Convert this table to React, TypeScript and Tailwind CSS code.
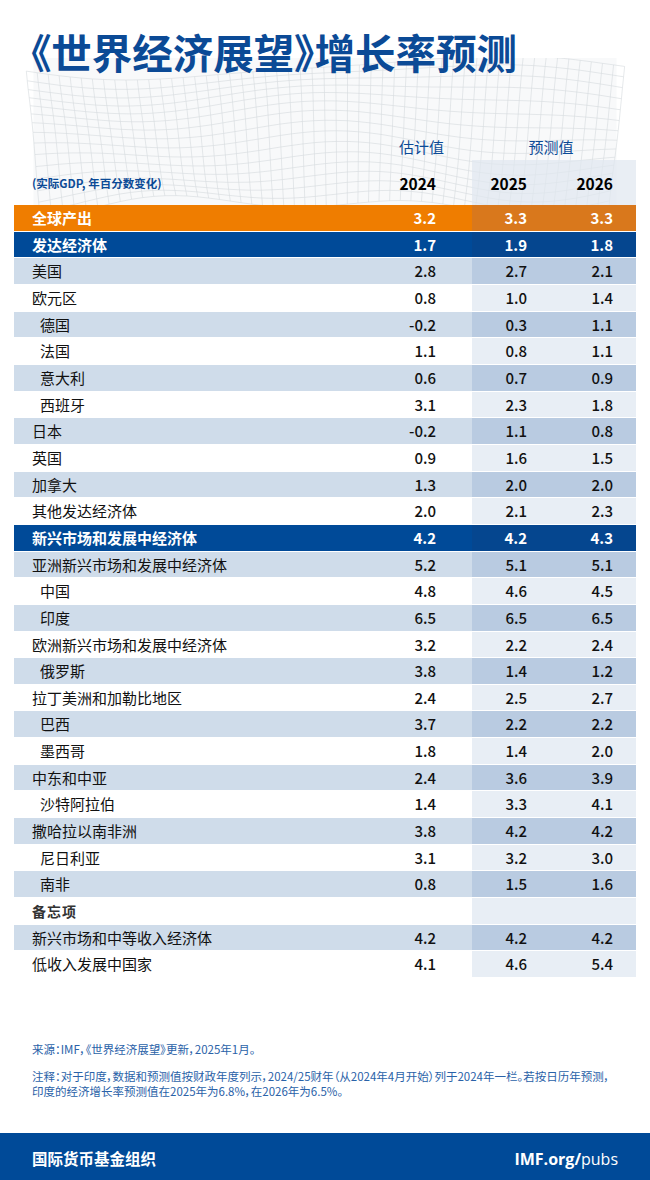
import React from "react";

type Row = {
  label: string;
  v: [string, string, string];
  kind?: "orange" | "blue" | "memo";
  indent?: boolean;
};

const rows: Row[] = [
  { label: "全球产出", v: ["3.2", "3.3", "3.3"], kind: "orange" },
  { label: "发达经济体", v: ["1.7", "1.9", "1.8"], kind: "blue" },
  { label: "美国", v: ["2.8", "2.7", "2.1"] },
  { label: "欧元区", v: ["0.8", "1.0", "1.4"] },
  { label: "德国", v: ["-0.2", "0.3", "1.1"], indent: true },
  { label: "法国", v: ["1.1", "0.8", "1.1"], indent: true },
  { label: "意大利", v: ["0.6", "0.7", "0.9"], indent: true },
  { label: "西班牙", v: ["3.1", "2.3", "1.8"], indent: true },
  { label: "日本", v: ["-0.2", "1.1", "0.8"] },
  { label: "英国", v: ["0.9", "1.6", "1.5"] },
  { label: "加拿大", v: ["1.3", "2.0", "2.0"] },
  { label: "其他发达经济体", v: ["2.0", "2.1", "2.3"] },
  { label: "新兴市场和发展中经济体", v: ["4.2", "4.2", "4.3"], kind: "blue" },
  { label: "亚洲新兴市场和发展中经济体", v: ["5.2", "5.1", "5.1"] },
  { label: "中国", v: ["4.8", "4.6", "4.5"], indent: true },
  { label: "印度", v: ["6.5", "6.5", "6.5"], indent: true },
  { label: "欧洲新兴市场和发展中经济体", v: ["3.2", "2.2", "2.4"] },
  { label: "俄罗斯", v: ["3.8", "1.4", "1.2"], indent: true },
  { label: "拉丁美洲和加勒比地区", v: ["2.4", "2.5", "2.7"] },
  { label: "巴西", v: ["3.7", "2.2", "2.2"], indent: true },
  { label: "墨西哥", v: ["1.8", "1.4", "2.0"], indent: true },
  { label: "中东和中亚", v: ["2.4", "3.6", "3.9"] },
  { label: "沙特阿拉伯", v: ["1.4", "3.3", "4.1"], indent: true },
  { label: "撒哈拉以南非洲", v: ["3.8", "4.2", "4.2"] },
  { label: "尼日利亚", v: ["3.1", "3.2", "3.0"], indent: true },
  { label: "南非", v: ["0.8", "1.5", "1.6"], indent: true },
  { label: "备忘项", v: ["", "", ""], kind: "memo" },
  { label: "新兴市场和中等收入经济体", v: ["4.2", "4.2", "4.2"] },
  { label: "低收入发展中国家", v: ["4.1", "4.6", "5.4"] },
];

function Mesh() {
  const W = 622;
  const H = 150;
  const nr = 15;
  const nc = 52;
  const pt = (i: number, j: number) => {
    const t = j / nc;
    const u = i / nr;
    const x = t * W + (u - 0.5) * 18 * Math.sin(t * 4 + 1);
    const y =
      u * H +
      9 * Math.sin(t * 6.5 + u * 2.5) +
      6 * Math.sin(t * 13 - u * 4) * (0.4 + u) +
      4 * Math.cos(t * 3 + u * 7);
    return `${x.toFixed(1)},${y.toFixed(1)}`;
  };
  const lines: string[] = [];
  for (let i = 0; i <= nr; i++) {
    const p: string[] = [];
    for (let j = 0; j <= nc; j++) p.push(pt(i, j));
    lines.push(p.join(" "));
  }
  for (let j = 0; j <= nc; j++) {
    const p: string[] = [];
    for (let i = 0; i <= nr; i++) p.push(pt(i, j));
    lines.push(p.join(" "));
  }
  return (
    <svg width={W} height={H} viewBox={`0 -10 ${W} ${H + 10}`} className="absolute left-[14px] top-[58px]">
      <rect x="0" y="-10" width={W} height={H + 10} fill="#f8f9fa" />
      {lines.map((d, k) => (
        <polyline key={k} points={d} fill="none" stroke="#d3d7db" strokeWidth="0.6" />
      ))}
    </svg>
  );
}

export default function App() {
  let k = 0;
  return (
    <div
      className="relative flex h-[1180px] w-[650px] flex-col overflow-hidden bg-white"
      style={{ fontFamily: '"Noto Sans CJK SC", "Noto Sans", sans-serif' }}
    >
      <Mesh />
      <div className="relative pl-[31px] pt-[32px]">
        <h1
          className="whitespace-nowrap text-[40.5px] font-bold leading-[40px] text-[#0b4a96]"
          style={{ fontFeatureSettings: '"palt"' }}
        >
          《世界经济展望》增长率预测
        </h1>
      </div>

      <div className="relative mx-[14px] mt-[65px]">
        <div className="flex h-[20px] items-center text-[15px] leading-[20px] text-[#0b4a96]">
          <div className="flex-1" />
          <div className="w-[90px] pr-[28px] text-right">估计值</div>
          <div className="w-[164px] pr-[6px] text-center">预测值</div>
        </div>
        <div className="mt-[3px] flex h-[45px] items-stretch">
          <div className="flex flex-1 items-center pl-[18px] pt-[3px] text-[11.5px] font-bold text-[#0b4a96]">(实际GDP, 年百分数变化)</div>
          <div className="flex w-[90px] items-center justify-end pr-[36px] pt-[3px] text-[15.5px] font-bold text-black">2024</div>
          <div className="flex w-[80px] items-center justify-end bg-[#dfe7f0]/70 pr-[25px] pt-[3px] text-[15.5px] font-bold text-black">2025</div>
          <div className="flex w-[84px] items-center justify-end bg-[#dfe7f0]/70 pr-[23px] pt-[3px] text-[15.5px] font-bold text-black">2026</div>
        </div>

        <div className="flex flex-col">
          {rows.map((r, idx) => {
            let shaded = false;
            if (r.kind === "orange" || r.kind === "blue") {
              k = 0;
            } else {
              shaded = k % 2 === 0;
              k++;
            }
            let base = "bg-white text-[#111]";
            let fc = "bg-[#e8eef5]";
            if (r.kind === "orange") {
              base = "bg-[#ef7d00] text-white font-bold";
              fc = "bg-[#d9781c]";
            } else if (r.kind === "blue") {
              base = "bg-[#004a98] text-white font-bold";
              fc = "bg-[#05468f]";
            } else if (shaded) {
              base = "bg-[#cfdcea] text-[#111]";
              fc = "bg-[#b9cbe1]";
            }
            const num = r.kind === "orange" || r.kind === "blue" ? "font-bold" : "font-medium";
            return (
              <div key={idx} className={`flex h-[26.67px] border-b border-white text-[15px] leading-[26px] ${base}`}>
                <div
                  className={`flex-1 whitespace-nowrap ${r.indent ? "pl-[26px]" : "pl-[18px]"} ${
                    r.kind === "memo" ? "text-[14px] font-bold tracking-[1px] text-[#333]" : ""
                  }`}
                >
                  {r.label}
                </div>
                <div className={`w-[90px] pr-[36px] text-right ${num}`}>{r.v[0]}</div>
                <div className={`w-[80px] pr-[25px] text-right ${num} ${fc}`}>{r.v[1]}</div>
                <div className={`w-[84px] pr-[23px] text-right ${num} ${fc}`}>{r.v[2]}</div>
              </div>
            );
          })}
        </div>
      </div>

      <div
        className="mt-[64px] px-[32px] text-[11.5px] leading-[15px] text-[#2a62a8]"
        style={{ fontFeatureSettings: '"palt"' }}
      >
        <p className="whitespace-nowrap">来源：IMF，《世界经济展望》更新，2025年1月。</p>
        <p className="mt-[12px] whitespace-nowrap">
          注释：对于印度，数据和预测值按财政年度列示，2024/25财年（从2024年4月开始）列于2024年一栏。若按日历年预测，
          <br />
          印度的经济增长率预测值在2025年为6.8%，在2026年为6.5%。
        </p>
      </div>

      <div className="mt-auto flex h-[47px] items-center justify-between bg-[#004a98] px-[32px] pt-[4px] text-white">
        <span className="text-[15.5px] font-bold">国际货币基金组织</span>
        <span className="text-[16px]" style={{ fontFamily: '"Open Sans", "Noto Sans", sans-serif' }}>
          <span className="font-bold">IMF.org/</span>
          <span className="font-normal">pubs</span>
        </span>
      </div>
    </div>
  );
}
